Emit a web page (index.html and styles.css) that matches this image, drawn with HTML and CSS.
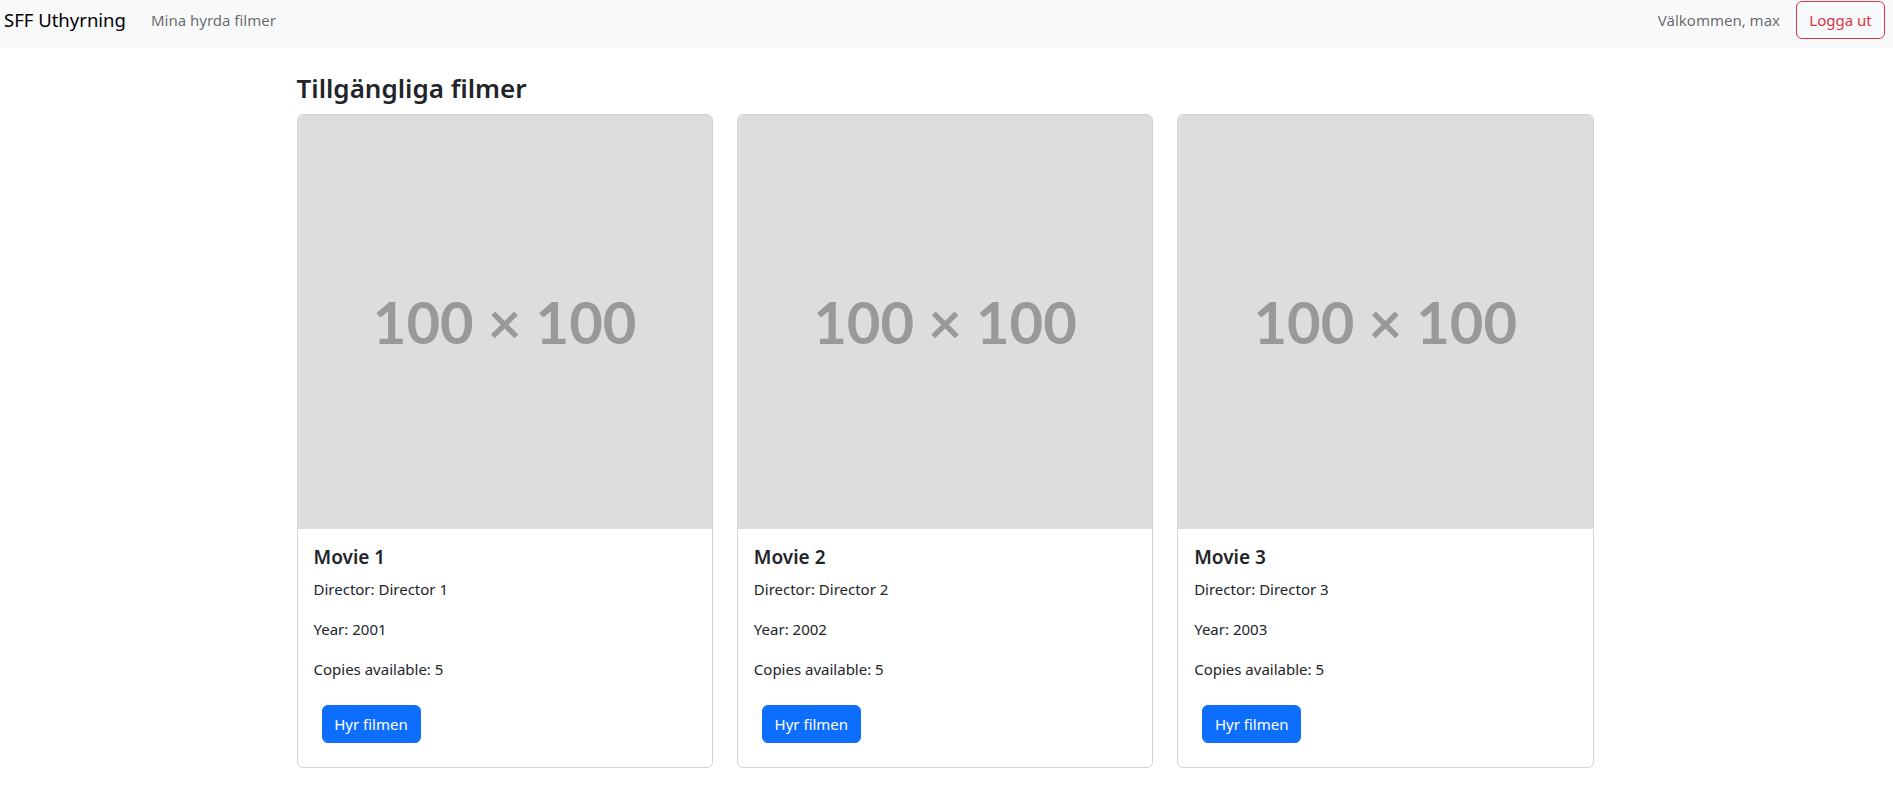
FILE: index.html
```html
<!DOCTYPE html>
<html lang="sv">
<head>
<meta charset="utf-8">
<title>SFF Uthyrning</title>
<link rel="stylesheet" href="styles.css">
</head>
<body>
<nav class="navbar">
  <div class="nav-left">
    <a class="brand" href="#">SFF Uthyrning</a>
    <a class="nav-link" href="#">Mina hyrda filmer</a>
  </div>
  <div class="nav-right">
    <span class="welcome">Välkommen, max</span>
    <button class="btn btn-outline-danger">Logga ut</button>
  </div>
</nav>
<main class="container">
  <h3 class="page-title">Tillgängliga filmer</h3>
  <div class="movie-grid">
    <div class="card">
      <div class="card-img"><span>100 × 100</span></div>
      <div class="card-body">
        <h5 class="card-title">Movie 1</h5>
        <p>Director: Director 1</p>
        <p>Year: 2001</p>
        <p>Copies available: 5</p>
        <button class="btn btn-primary">Hyr filmen</button>
      </div>
    </div>
    <div class="card">
      <div class="card-img"><span>100 × 100</span></div>
      <div class="card-body">
        <h5 class="card-title">Movie 2</h5>
        <p>Director: Director 2</p>
        <p>Year: 2002</p>
        <p>Copies available: 5</p>
        <button class="btn btn-primary">Hyr filmen</button>
      </div>
    </div>
    <div class="card">
      <div class="card-img"><span>100 × 100</span></div>
      <div class="card-body">
        <h5 class="card-title">Movie 3</h5>
        <p>Director: Director 3</p>
        <p>Year: 2003</p>
        <p>Copies available: 5</p>
        <button class="btn btn-primary">Hyr filmen</button>
      </div>
    </div>
  </div>
</main>
</body>
</html>
```

FILE: styles.css
```css
* { box-sizing: border-box; }
html, body { margin: 0; padding: 0; }
body {
  font-family: "Noto Sans", "Liberation Sans", sans-serif;
  font-size: 15px;
  line-height: 24px;
  color: #212529;
  background: #fff;
}
.navbar {
  height: 48px;
  background: #f8f9fa;
  display: flex;
  justify-content: space-between;
  align-items: flex-start;
  padding: 0 8px 0 4px;
}
.nav-left, .nav-right {
  height: 40px;
  display: flex;
  align-items: center;
}
.brand {
  font-size: 18.5px;
  line-height: 30px;
  color: #000;
  text-decoration: none;
  margin-right: 17px;
}
.nav-link {
  color: rgba(0,0,0,.6);
  text-decoration: none;
  padding: 8px;
}
.welcome {
  color: rgba(0,0,0,.6);
  margin-right: 16px;
}
.btn {
  font-family: inherit;
  font-size: 15px;
  line-height: 24px;
  padding: 6px 0;
  border-radius: 6px;
  border: 1px solid transparent;
  white-space: nowrap;
  text-align: center;
  cursor: pointer;
}
.btn-outline-danger {
  color: #dc3545;
  background: transparent;
  border-color: #dc3545;
  width: 89px;
}
.btn-primary {
  color: #fff;
  background: #0d6efd;
  border-color: #0d6efd;
  margin: 8px;
  width: 99px;
}
.container {
  width: 1320px;
  margin: 24px auto 0;
  padding: 0 13px 0 10px;
}
.page-title {
  margin: 0 0 8px;
  font-size: 26px;
  line-height: 33.5px;
  font-weight: 600;
}
.movie-grid {
  display: grid;
  grid-template-columns: repeat(3, 1fr);
  gap: 24px;
}
.card {
  border: 1px solid rgba(0,0,0,.175);
  border-radius: 6px;
  overflow: hidden;
}
.card-img {
  aspect-ratio: 1 / 1;
  background: #dddddd;
  display: flex;
  align-items: center;
  justify-content: center;
}
.card-img span {
  font-family: Lato, "Noto Sans", sans-serif;
  font-weight: 700;
  font-size: 58px;
  color: #999999;
}
.card-body {
  padding: 16px;
}
.card-title {
  margin: 0 0 8px;
  font-size: 19px;
  line-height: 24px;
  font-weight: 600;
}
.card-body p {
  margin: 0 0 16px;
}
```
